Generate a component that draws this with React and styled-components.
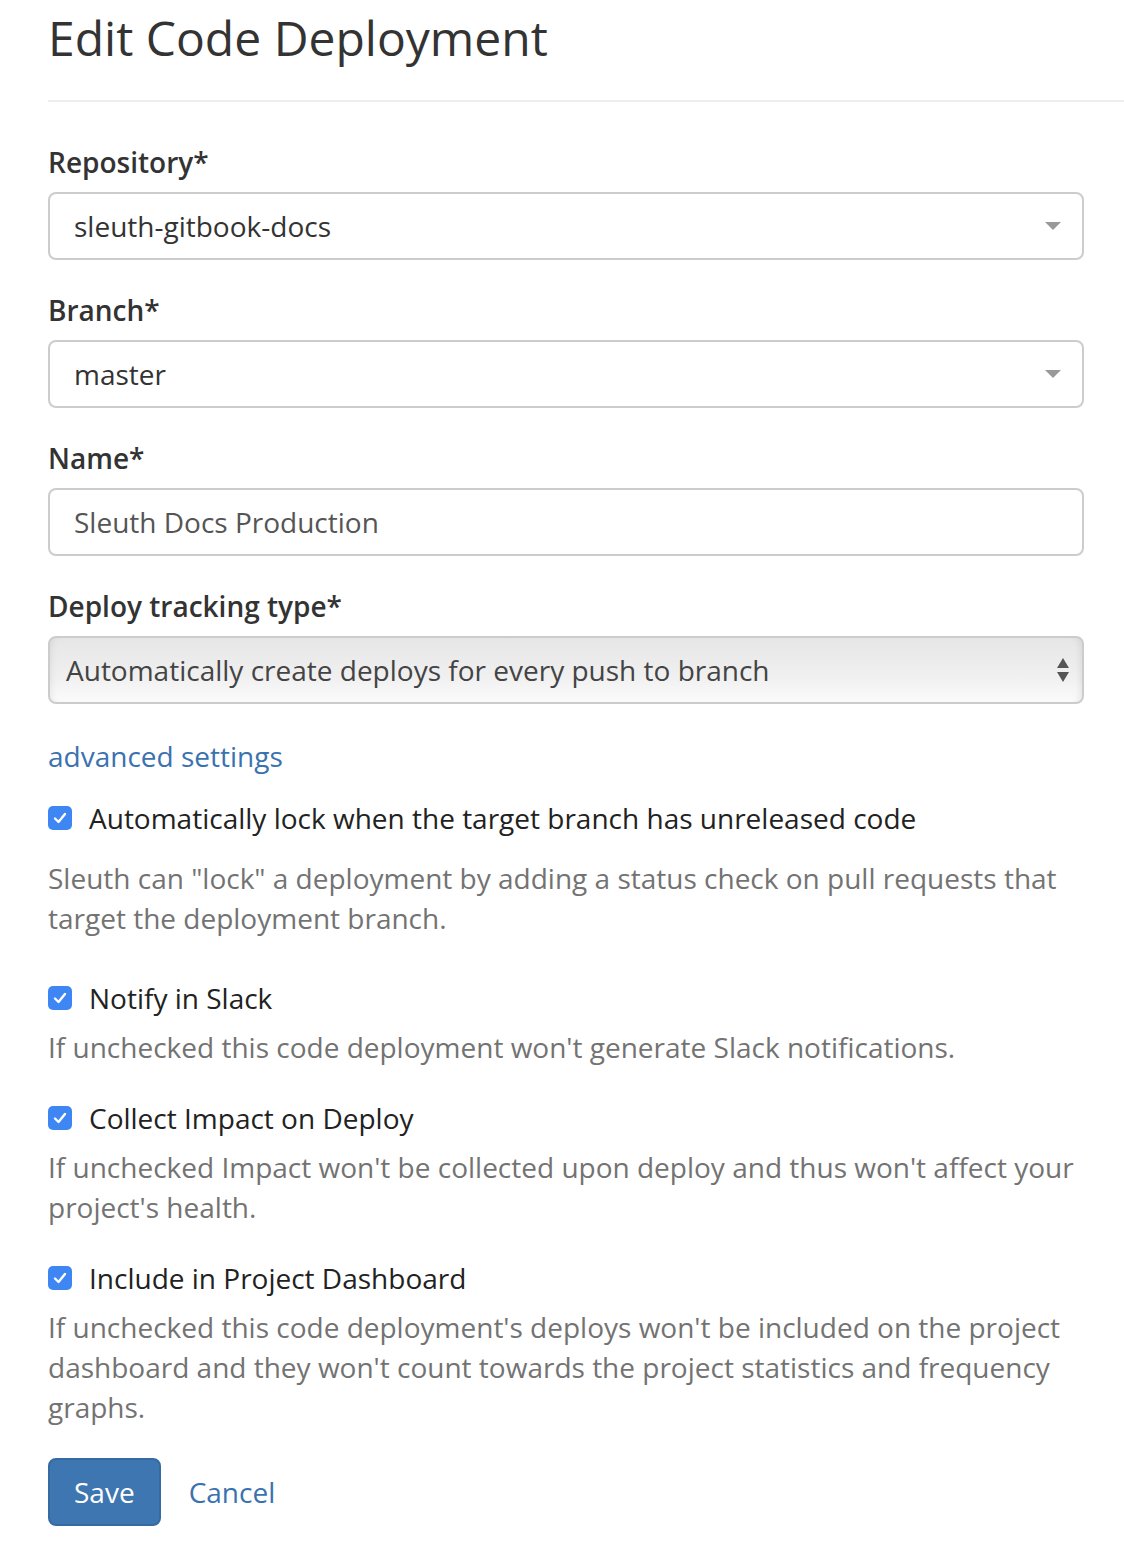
import React from 'react';
import styled, { createGlobalStyle } from 'styled-components';

const GlobalStyle = createGlobalStyle`
    body {
        margin: 0;
        background: #fff;
        font-family: "Open Sans", "Liberation Sans", sans-serif;
        font-size: 28px;
        line-height: 40px;
        color: #333;
    }
`;

const Page = styled.div`
    padding-left: 48px;
`;

const Title = styled.h1`
    margin: 11px 0 0;
    font-size: 48px;
    line-height: 53px;
    font-weight: 400;
    color: #333;
`;

const Divider = styled.hr`
    margin: 36px 0 40px;
    border: 0;
    border-top: 2px solid #eee;
`;

const Form = styled.form`
    max-width: 1036px;
`;

const Group = styled.div`
    margin-bottom: 30px;
`;

const Label = styled.label`
    display: block;
    margin-bottom: 10px;
    font-weight: 600;
    color: #333;
`;

const Field = styled.div`
    box-sizing: border-box;
    height: 68px;
    display: flex;
    align-items: center;
    justify-content: space-between;
    padding: 0 21px 0 24px;
    border: 2px solid #ccc;
    border-radius: 8px;
    background: #fff;
    color: ${p => (p.$muted ? '#555' : '#333')};
`;

const Caret = styled.span`
    width: 0;
    height: 0;
    border-left: 8px solid transparent;
    border-right: 8px solid transparent;
    border-top: 8px solid #999;
`;

const NativeSelect = styled.div`
    box-sizing: border-box;
    height: 68px;
    display: flex;
    align-items: center;
    justify-content: space-between;
    padding: 0 12px 0 16px;
    border: 2px solid #ccc;
    border-radius: 8px;
    background: linear-gradient(#e6e6e6, #f0f0f0 60%, #fbfbfb);
    box-shadow: inset -6px 0 6px -4px rgba(0, 0, 0, 0.08), inset 6px 0 6px -4px rgba(0, 0, 0, 0.06);
    color: #444;
`;

const Link = styled.a`
    color: #3a72b0;
    text-decoration: none;
    cursor: pointer;
`;

const Advanced = styled.div`
    margin: -28px 0 22px;
    padding-top: 30px;
`;

const CheckRow = styled.label`
    display: flex;
    align-items: center;
    gap: 17px;
    height: 40px;
    color: #222;
`;

const Box = styled.span`
    width: 24px;
    height: 24px;
    flex: none;
    border-radius: 5px;
    background: #3d86f3;
    display: flex;
    align-items: center;
    justify-content: center;
`;

const Help = styled.p`
    margin: ${p => (p.$first ? '20px 0 40px' : '9px 0 31px')};
    color: #737373;
`;

const Actions = styled.div`
    display: flex;
    align-items: center;
    gap: 28px;
`;

const SaveButton = styled.button`
    box-sizing: border-box;
    height: 68px;
    padding: 0 24px;
    font: inherit;
    color: #fff;
    background: #3e76b1;
    border: 2px solid #356aa3;
    border-radius: 8px;
    cursor: pointer;
`;

function Check() {
    return (
        <Box>
            <svg width="14" height="12" viewBox="0 0 14 12">
                <path d="M2 6.5 L5.5 10 L12 2" fill="none" stroke="#fff" strokeWidth="2.4" strokeLinecap="round" strokeLinejoin="round" />
            </svg>
        </Box>
    );
}

const options = [
    {
        label: 'Automatically lock when the target branch has unreleased code',
        help: 'Sleuth can "lock" a deployment by adding a status check on pull requests that target the deployment branch.',
    },
    {
        label: 'Notify in Slack',
        help: "If unchecked this code deployment won't generate Slack notifications.",
    },
    {
        label: 'Collect Impact on Deploy',
        help: "If unchecked Impact won't be collected upon deploy and thus won't affect your project's health.",
    },
    {
        label: 'Include in Project Dashboard',
        help: "If unchecked this code deployment's deploys won't be included on the project dashboard and they won't count towards the project statistics and frequency graphs.",
    },
];

function App() {
    return (
        <Page>
            <GlobalStyle />
            <Title>Edit Code Deployment</Title>
            <Divider />
            <Form onSubmit={e => e.preventDefault()}>
                <Group>
                    <Label>Repository*</Label>
                    <Field>
                        sleuth-gitbook-docs
                        <Caret />
                    </Field>
                </Group>
                <Group>
                    <Label>Branch*</Label>
                    <Field>
                        master
                        <Caret />
                    </Field>
                </Group>
                <Group>
                    <Label>Name*</Label>
                    <Field $muted>Sleuth Docs Production</Field>
                </Group>
                <Group>
                    <Label>Deploy tracking type*</Label>
                    <NativeSelect>
                        Automatically create deploys for every push to branch
                        <svg width="14" height="26" viewBox="0 0 14 26">
                            <path d="M7 1 L13 11 L1 11 Z" fill="#555" />
                            <path d="M1 15 L13 15 L7 25 Z" fill="#555" />
                        </svg>
                    </NativeSelect>
                </Group>
                <Advanced>
                    <Link>advanced settings</Link>
                </Advanced>
                {options.map((o, i) => (
                    <div key={o.label}>
                        <CheckRow>
                            <Check />
                            {o.label}
                        </CheckRow>
                        <Help $first={i === 0}>{o.help}</Help>
                    </div>
                ))}
                <Actions>
                    <SaveButton type="submit">Save</SaveButton>
                    <Link>Cancel</Link>
                </Actions>
            </Form>
        </Page>
    );
}

export default App;
